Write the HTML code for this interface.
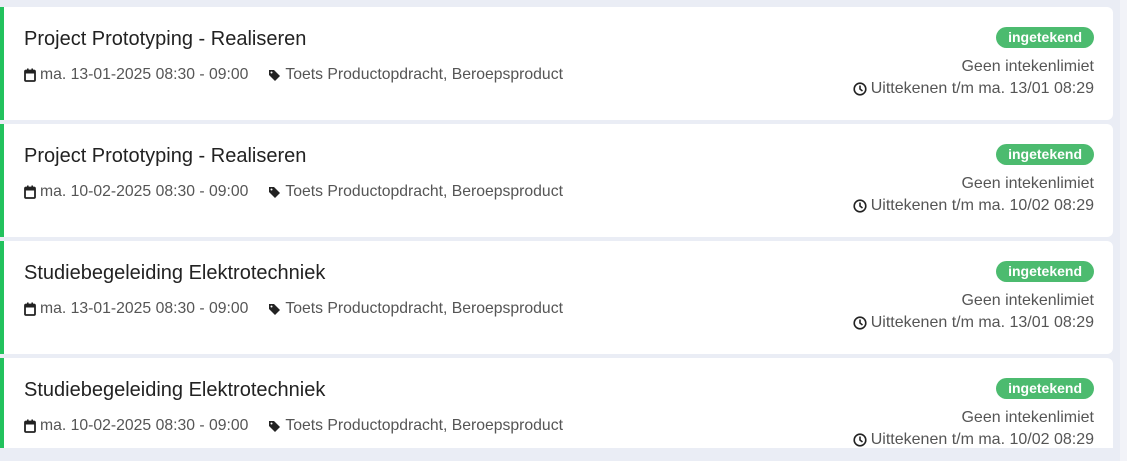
<!DOCTYPE html><html><head><style>
body{margin:0;width:1127px;height:461px;background:#eaedf5;font-family:"Liberation Sans",sans-serif;position:relative;overflow:hidden}
.sb{position:absolute;right:0;top:0;width:7px;height:461px;background:#f2f3f8}
.c{position:absolute;left:0;width:1113px;height:113px;background:#fff;border-left:4px solid #22c25d;box-sizing:border-box;border-radius:0 6px 6px 0}
.t{position:absolute;left:20px;top:21px;font-size:20px;color:#222}
.m{position:absolute;left:20px;top:59px;font-size:15.75px;color:#555;display:flex;align-items:center}
.m svg{margin-right:4px}
.b{position:absolute;right:19px;top:20px;background:#4cbb6f;color:#fff;font-weight:bold;font-size:14px;padding:2px 12px;border-radius:11px;line-height:17px}
.g{position:absolute;right:19px;top:51px;font-size:16px;color:#555;text-align:right}
.u{position:absolute;right:19px;top:73px;font-size:16px;color:#555;display:flex;align-items:center}
.u svg{margin-right:4px}
</style></head><body>
<div class="sb"></div>
<div class="c" style="top:7px"><div class="t">Project Prototyping - Realiseren</div><div class="m"><svg width="12" height="14" viewBox="0 0 12 14"><rect x="1" y="2.5" width="10" height="10.5" rx="1" fill="none" stroke="#222" stroke-width="1.8"/><rect x="1" y="2.5" width="10" height="3" fill="#222"/><rect x="3" y="0.5" width="1.6" height="3" fill="#222"/><rect x="7.4" y="0.5" width="1.6" height="3" fill="#222"/></svg>ma. 13-01-2025 08:30 - 09:00<span style="width:20px"></span><svg width="13" height="13" viewBox="0 0 13 13"><path d="M1 1h5l6 6-5 5-6-6z" fill="#222"/><circle cx="3.5" cy="3.5" r="1" fill="#fff"/></svg>Toets Productopdracht, Beroepsproduct</div><div class="b">ingetekend</div><div class="g">Geen intekenlimiet</div><div class="u"><svg width="14" height="14" viewBox="0 0 14 14"><circle cx="7" cy="7" r="5.8" fill="none" stroke="#222" stroke-width="1.6"/><path d="M7 3.5V7l2.5 2" fill="none" stroke="#222" stroke-width="1.6"/></svg>Uittekenen t/m ma. 13/01 08:29</div></div>
<div class="c" style="top:124px"><div class="t">Project Prototyping - Realiseren</div><div class="m"><svg width="12" height="14" viewBox="0 0 12 14"><rect x="1" y="2.5" width="10" height="10.5" rx="1" fill="none" stroke="#222" stroke-width="1.8"/><rect x="1" y="2.5" width="10" height="3" fill="#222"/><rect x="3" y="0.5" width="1.6" height="3" fill="#222"/><rect x="7.4" y="0.5" width="1.6" height="3" fill="#222"/></svg>ma. 10-02-2025 08:30 - 09:00<span style="width:20px"></span><svg width="13" height="13" viewBox="0 0 13 13"><path d="M1 1h5l6 6-5 5-6-6z" fill="#222"/><circle cx="3.5" cy="3.5" r="1" fill="#fff"/></svg>Toets Productopdracht, Beroepsproduct</div><div class="b">ingetekend</div><div class="g">Geen intekenlimiet</div><div class="u"><svg width="14" height="14" viewBox="0 0 14 14"><circle cx="7" cy="7" r="5.8" fill="none" stroke="#222" stroke-width="1.6"/><path d="M7 3.5V7l2.5 2" fill="none" stroke="#222" stroke-width="1.6"/></svg>Uittekenen t/m ma. 10/02 08:29</div></div>
<div class="c" style="top:241px"><div class="t">Studiebegeleiding Elektrotechniek</div><div class="m"><svg width="12" height="14" viewBox="0 0 12 14"><rect x="1" y="2.5" width="10" height="10.5" rx="1" fill="none" stroke="#222" stroke-width="1.8"/><rect x="1" y="2.5" width="10" height="3" fill="#222"/><rect x="3" y="0.5" width="1.6" height="3" fill="#222"/><rect x="7.4" y="0.5" width="1.6" height="3" fill="#222"/></svg>ma. 13-01-2025 08:30 - 09:00<span style="width:20px"></span><svg width="13" height="13" viewBox="0 0 13 13"><path d="M1 1h5l6 6-5 5-6-6z" fill="#222"/><circle cx="3.5" cy="3.5" r="1" fill="#fff"/></svg>Toets Productopdracht, Beroepsproduct</div><div class="b">ingetekend</div><div class="g">Geen intekenlimiet</div><div class="u"><svg width="14" height="14" viewBox="0 0 14 14"><circle cx="7" cy="7" r="5.8" fill="none" stroke="#222" stroke-width="1.6"/><path d="M7 3.5V7l2.5 2" fill="none" stroke="#222" stroke-width="1.6"/></svg>Uittekenen t/m ma. 13/01 08:29</div></div>
<div class="c" style="top:358px;height:90px;border-radius:0 6px 0 0"><div class="t">Studiebegeleiding Elektrotechniek</div><div class="m"><svg width="12" height="14" viewBox="0 0 12 14"><rect x="1" y="2.5" width="10" height="10.5" rx="1" fill="none" stroke="#222" stroke-width="1.8"/><rect x="1" y="2.5" width="10" height="3" fill="#222"/><rect x="3" y="0.5" width="1.6" height="3" fill="#222"/><rect x="7.4" y="0.5" width="1.6" height="3" fill="#222"/></svg>ma. 10-02-2025 08:30 - 09:00<span style="width:20px"></span><svg width="13" height="13" viewBox="0 0 13 13"><path d="M1 1h5l6 6-5 5-6-6z" fill="#222"/><circle cx="3.5" cy="3.5" r="1" fill="#fff"/></svg>Toets Productopdracht, Beroepsproduct</div><div class="b">ingetekend</div><div class="g">Geen intekenlimiet</div><div class="u"><svg width="14" height="14" viewBox="0 0 14 14"><circle cx="7" cy="7" r="5.8" fill="none" stroke="#222" stroke-width="1.6"/><path d="M7 3.5V7l2.5 2" fill="none" stroke="#222" stroke-width="1.6"/></svg>Uittekenen t/m ma. 10/02 08:29</div></div>
</body></html>
